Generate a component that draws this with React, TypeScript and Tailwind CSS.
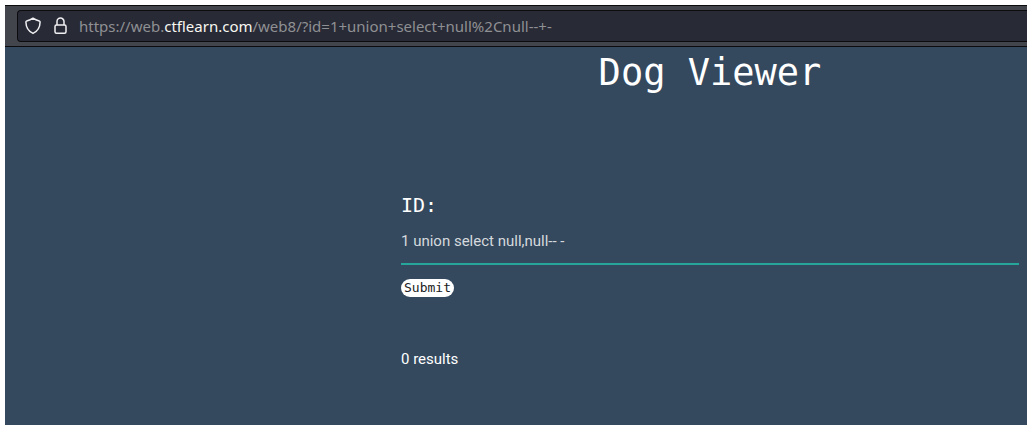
import React from "react";

const MONO = "font-['DejaVu_Sans_Mono',monospace]";

function ShieldIcon() {
  return (
    <svg aria-hidden="true" width="16" height="18" viewBox="0 0 16 18" fill="none" stroke="#f0f0f2" strokeWidth="1.5" strokeLinejoin="round">
      <path d="M8 1.2 C6 2.6 3.8 3.4 1.7 3.9 C1 4.1 .9 4.5 .9 5.1 C1 10.6 3.2 14.3 8 16.4 C12.8 14.3 15 10.6 15.1 5.1 C15.1 4.5 15 4.1 14.3 3.9 C12.2 3.4 10 2.6 8 1.2 Z" />
    </svg>
  );
}

function LockIcon() {
  return (
    <svg aria-hidden="true" width="14" height="18" viewBox="0 0 14 18" fill="none" stroke="#f0f0f2" strokeWidth="1.5">
      <rect x="2" y="8" width="11" height="8.2" rx="1.5" />
      <path d="M4 8 V4.6 A3.5 3.5 0 0 1 11 4.6 V8" />
    </svg>
  );
}

function AddressBar() {
  return (
    <header className="border-y border-[#0c0c0f] bg-[#42454b] py-1 pl-3">
      <div className="flex h-8 items-center rounded-l border border-r-0 border-[#0c0c0f] bg-[#282a36] pl-[7px] font-['Noto_Sans',sans-serif] text-[15px] leading-5">
        <ShieldIcon />
        <span className="ml-3 flex">
          <LockIcon />
        </span>
        <p className="ml-3 whitespace-nowrap text-[#8f9093]">
          https://web.<span className="text-[#f8f8f2]">ctflearn.com</span>/web8/?id=1+union+select+null%2Cnull--+-
        </p>
      </div>
    </header>
  );
}

export default function App() {
  return (
    <div className="bg-white p-[5px]">
      <AddressBar />
      <main className="min-h-[378px] bg-[#34495e] pr-2 pl-[396px] font-[Roboto,sans-serif] text-[15px] leading-6 text-white">
        <h1 className={`${MONO} text-center text-[37px] leading-[52px]`}>Dog Viewer</h1>
        <form className="mt-[94px]" onSubmit={(e) => e.preventDefault()}>
          <label htmlFor="dog-id" className={`${MONO} block text-xl leading-6`}>
            ID:
          </label>
          <input
            id="dog-id"
            type="text"
            defaultValue="1 union select null,null-- -"
            className="block h-12 w-full border-b-2 border-[#26a69a] bg-transparent pt-0.5 text-[15px] text-[#d5d9dd] outline-none"
          />
          <button
            type="submit"
            className={`${MONO} mt-3.5 block h-[18px] rounded-full bg-white px-[3px] text-[13px] leading-[18px] text-[#212121]`}
          >
            Submit
          </button>
        </form>
        <p className="mt-[50px]">0 results</p>
      </main>
    </div>
  );
}
